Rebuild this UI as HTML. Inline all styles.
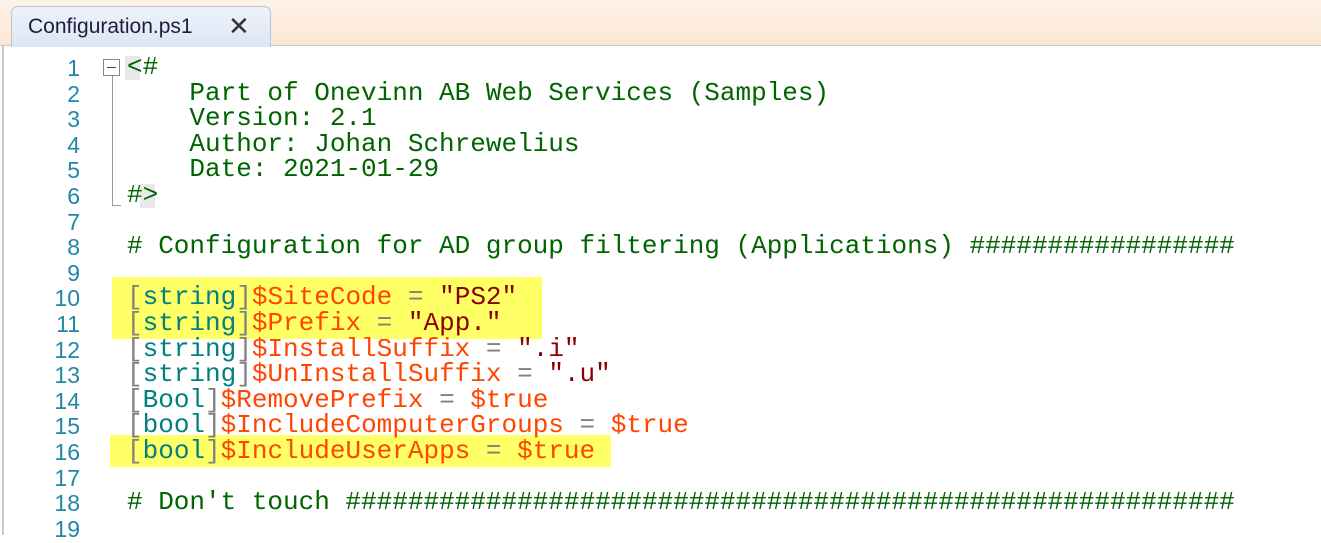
<!DOCTYPE html>
<html><head><meta charset="utf-8"><style>
body{margin:0;width:1321px;height:535px;overflow:hidden;background:#fff;position:relative;font-family:"Liberation Mono",monospace}
.top{position:absolute;left:0;top:0;width:1321px;height:45px;background:linear-gradient(#fdf3ea,#fbe6d3);border-bottom:1px solid #c9c9c9}
.tab{position:absolute;left:11px;top:6px;width:258px;height:40px;background:linear-gradient(#eef3fb,#dbe6f4);border:1px solid #b8c3d3;border-bottom:none;border-radius:7px 7px 0 0;font-family:"Liberation Sans",sans-serif;font-size:21px;color:#1e1e3c}
.tab span{position:absolute;left:16px;top:8px}
.tab b{position:absolute;left:216px;top:4px;font-weight:normal;font-size:26px;color:#333}
.ed{position:absolute;left:2px;top:46px;width:1319px;height:489px;border-left:2px solid #c8c8c8}
.ln{position:absolute;left:0;width:80px;text-align:right;color:#2386a8;font-size:23px;font-family:"Liberation Sans",sans-serif}
.l{position:absolute;left:127px;font-size:26px;white-space:pre;line-height:26px}
.c{color:#006400}.g{color:#808080}.t{color:#008080}.v{color:#ff4500}.s{color:#8b0000}
.hl{position:absolute;background:#ffff66}
</style></head><body>
<div class="top"></div>
<div class="tab"><span>Configuration.ps1</span><b>✕</b></div>
<div class="ed"></div>
<div class="hl" style="left:112px;top:277px;width:430px;height:62px"></div>
<div class="hl" style="left:110px;top:435px;width:501px;height:32px"></div>
<div style="position:absolute;left:103px;top:59px;width:15px;height:15px;border:1px solid #888;background:#fff"></div>
<div style="position:absolute;left:107px;top:67px;width:9px;height:1px;background:#444"></div>
<div style="position:absolute;left:112px;top:76px;width:1px;height:130px;background:#999"></div>
<div style="position:absolute;left:112px;top:205px;width:9px;height:1px;background:#999"></div>
<div style="position:absolute;left:125px;top:56px;width:15px;height:24px;background:#e8e8e8"></div>
<div style="position:absolute;left:140px;top:184px;width:15px;height:24px;background:#e8e8e8"></div>
<div id="lines"></div>
<script>
var L=[
'<span class="c">&lt;#</span>',
'<span class="c">    Part of Onevinn AB Web Services (Samples)</span>',
'<span class="c">    Version: 2.1</span>',
'<span class="c">    Author: Johan Schrewelius</span>',
'<span class="c">    Date: 2021-01-29</span>',
'<span class="c">#&gt;</span>',
'',
'<span class="c"># Configuration for AD group filtering (Applications) #################</span>',
'',
'<span class="g">[</span><span class="t">string</span><span class="g">]</span><span class="v">$SiteCode</span> <span class="g">=</span> <span class="s">"PS2"</span>',
'<span class="g">[</span><span class="t">string</span><span class="g">]</span><span class="v">$Prefix</span> <span class="g">=</span> <span class="s">"App."</span>',
'<span class="g">[</span><span class="t">string</span><span class="g">]</span><span class="v">$InstallSuffix</span> <span class="g">=</span> <span class="s">".i"</span>',
'<span class="g">[</span><span class="t">string</span><span class="g">]</span><span class="v">$UnInstallSuffix</span> <span class="g">=</span> <span class="s">".u"</span>',
'<span class="g">[</span><span class="t">Bool</span><span class="g">]</span><span class="v">$RemovePrefix</span> <span class="g">=</span> <span class="v">$true</span>',
'<span class="g">[</span><span class="t">bool</span><span class="g">]</span><span class="v">$IncludeComputerGroups</span> <span class="g">=</span> <span class="v">$true</span>',
'<span class="g">[</span><span class="t">bool</span><span class="g">]</span><span class="v">$IncludeUserApps</span> <span class="g">=</span> <span class="v">$true</span>',
'',
'<span class="c"># Don\'t touch #########################################################</span>',
''];
var h='';
for(var i=0;i<19;i++){var y=54+i*25.6;
h+='<div class="ln" style="top:'+(y+1)+'px">'+(i+1)+'</div><div class="l" style="top:'+y+'px">'+L[i]+'</div>';}
document.getElementById('lines').innerHTML=h;
</script>
</body></html>
